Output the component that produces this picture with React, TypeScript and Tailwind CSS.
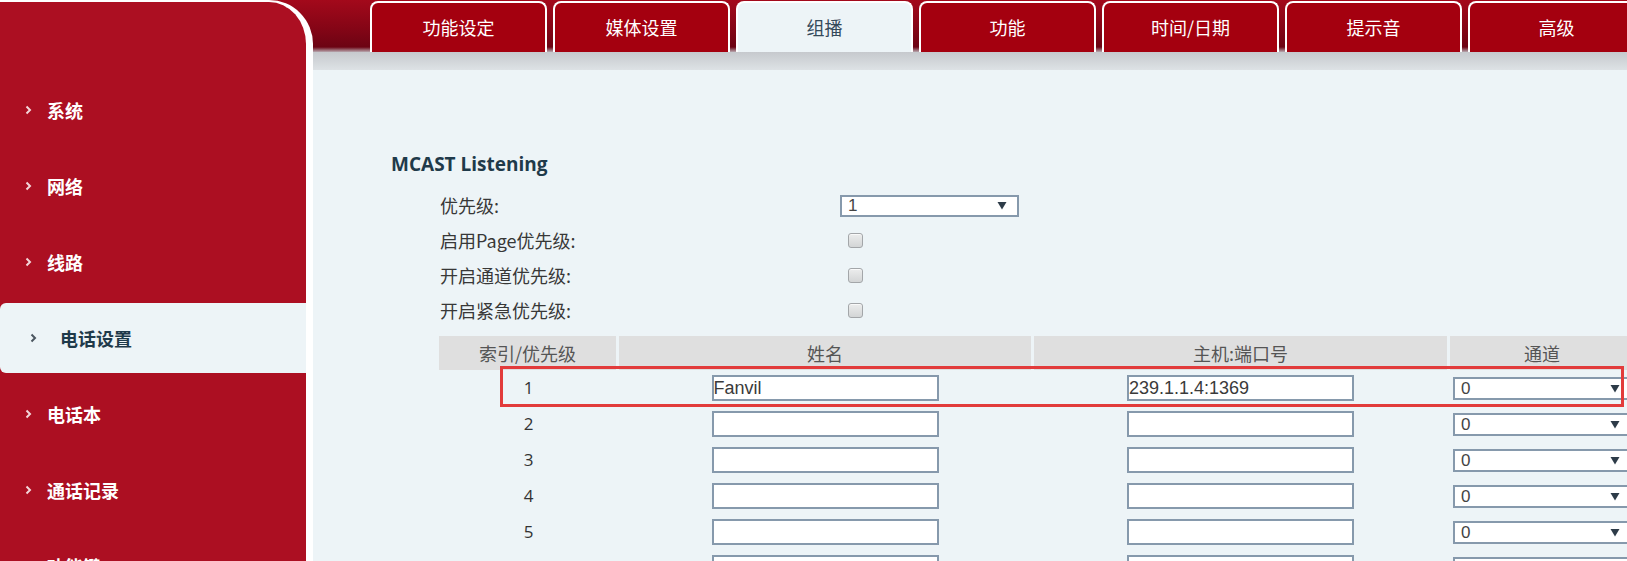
import React from 'react';

const cjk = "font-['Noto_Sans_CJK_SC','Noto_Sans',sans-serif]";

const menu = [
    { label: '系统' },
    { label: '网络' },
    { label: '线路' },
    { label: '电话设置', active: true },
    { label: '电话本' },
    { label: '通话记录' },
    { label: '功能键' }
];

const tabs = ['功能设定', '媒体设置', '组播', '功能', '时间/日期', '提示音', '高级'];

const rows = [
    { idx: 1, name: 'Fanvil', host: '239.1.1.4:1369' },
    { idx: 2, name: '', host: '' },
    { idx: 3, name: '', host: '' },
    { idx: 4, name: '', host: '' },
    { idx: 5, name: '', host: '' },
    { idx: 6, name: '', host: '' }
];

function Chevron({ dark }: { dark?: boolean }) {
    return (
        <svg width="7" height="10" viewBox="0 0 7 10" className="shrink-0">
            <path
                d="M1.5 1.5 L5 5 L1.5 8.5"
                fill="none"
                stroke={dark ? '#4b5660' : '#f3d6da'}
                strokeWidth="2"
            />
        </svg>
    );
}

function Arrow() {
    return (
        <svg width="10" height="9" viewBox="0 0 10 9" className="shrink-0">
            <path d="M0.5 1 L9.5 1 L5 8.5 Z" fill="#2d3b48" />
        </svg>
    );
}

function FakeSelect({ value, className }: { value: string; className: string }) {
    return (
        <div
            className={`flex shrink-0 items-center justify-between border-2 border-[#8699ac] bg-white pl-[6px] pr-[10px] font-['Liberation_Sans',Arial,sans-serif] text-[17px] leading-none text-[#444] ${className}`}
        >
            <span>{value}</span>
            <Arrow />
        </div>
    );
}

function Checkbox() {
    return (
        <div className="h-[15px] w-[15px] rounded-[3px] border border-[#a3a6a9] bg-[linear-gradient(180deg,#eceded,#d3d5d6)] shadow-[inset_0_1px_0_rgba(255,255,255,0.7)]" />
    );
}

function TextBox({ value }: { value: string }) {
    return (
        <div className="flex h-[26px] w-[227px] items-center border-2 border-[#8699ac] bg-white font-['Liberation_Sans',Arial,sans-serif] text-[18px] leading-none text-[#3a3a3a]">
            {value}
        </div>
    );
}

export default function App() {
    return (
        <div
            className={`relative flex h-[561px] w-full overflow-hidden bg-[linear-gradient(180deg,#a3091b_0px,#850516_28px,#6c0313_47px,#c7cacf_53px,#dce1e4_68px,#edf4f7_70px)] ${cjk}`}
        >
            {/* sidebar */}
            <aside className="h-full w-[313px] shrink-0 rounded-tr-[44px] border-t-2 border-r-[7px] border-white bg-[#ac0f22] pt-[70px]">
                {menu.map((m) =>
                    m.active ? (
                        <div key={m.label} className="flex h-[76px] items-center">
                            <div className="flex h-[70px] w-full items-center rounded-l-[6px] bg-[#edf4f7] pl-[30px]">
                                <Chevron dark />
                                <span className="ml-[23px] text-[18px] font-bold text-[#1f3a4a]">{m.label}</span>
                            </div>
                        </div>
                    ) : (
                        <div key={m.label} className="flex h-[76px] items-center pl-[25px]">
                            <Chevron />
                            <span className="ml-[15px] text-[18px] font-bold text-white">{m.label}</span>
                        </div>
                    )
                )}
            </aside>

            {/* main */}
            <main className="flex min-w-0 flex-1 flex-col overflow-hidden">
                <nav className="flex h-[52px] shrink-0 items-end gap-[6px] pl-[57px]">
                    {tabs.map((t) => (
                        <div
                            key={t}
                            className={`flex h-[51px] w-[177px] shrink-0 items-center justify-center rounded-t-[8px] border-2 border-b-0 border-white pb-[1px] text-[18px] ${
                                t === '组播' ? 'bg-[#edf4f7] text-[#34495a]' : 'bg-[#a4000f] text-white'
                            }`}
                        >
                            {t}
                        </div>
                    ))}
                </nav>
                <div className="h-[18px] shrink-0 bg-[linear-gradient(180deg,#c6c9cd,#dde2e5)]" />

                <section className="flex-1 bg-[#edf4f7] pl-[78px] pt-[80px]">
                    <h2 className="h-[28px] font-['Open_Sans',sans-serif] text-[19px] leading-[28px] font-bold text-[#1f3a4a]">
                        MCAST Listening
                    </h2>

                    <div className="mt-[10px] ml-[49px] text-[18px] text-[#383838]">
                        <div className="flex h-[35px] items-center">
                            <span className="w-[400px] shrink-0">优先级:</span>
                            <FakeSelect value="1" className="h-[22px] w-[179px]" />
                        </div>
                        {['启用Page优先级:', '开启通道优先级:', '开启紧急优先级:'].map((l) => (
                            <div key={l} className="flex h-[35px] items-center">
                                <span className="w-[408px] shrink-0">{l}</span>
                                <Checkbox />
                            </div>
                        ))}
                    </div>

                    <div className="mt-[8px] ml-[48px] w-max">
                        <div className="flex h-[34px] gap-[3px] text-[18px] text-[#555]">
                            <div className="flex w-[177px] shrink-0 items-center justify-center bg-[#dfdfdf]">索引/优先级</div>
                            <div className="flex w-[412px] shrink-0 items-center justify-center bg-[#dfdfdf]">姓名</div>
                            <div className="flex w-[413px] shrink-0 items-center justify-center bg-[#dfdfdf]">主机:端口号</div>
                            <div className="flex w-[184px] shrink-0 items-center justify-center bg-[#dfdfdf]">通道</div>
                        </div>
                        {rows.map((r) => (
                            <div key={r.idx} className="flex h-[36px] items-center gap-[3px]">
                                <div className="w-[177px] shrink-0 pl-[2px] text-center font-['Open_Sans',sans-serif] text-[17px] text-[#333]">
                                    {r.idx}
                                </div>
                                <div className="flex w-[412px] shrink-0 justify-center">
                                    <TextBox value={r.name} />
                                </div>
                                <div className="flex w-[413px] shrink-0 justify-center">
                                    <TextBox value={r.host} />
                                </div>
                                <div className="w-[184px] shrink-0 pl-[3px]">
                                    <FakeSelect value="0" className="h-[23px] w-[179px]" />
                                </div>
                            </div>
                        ))}
                    </div>
                </section>
            </main>

            {/* highlight box drawn over row 1 */}
            <div className="pointer-events-none absolute top-[366px] left-[500px] h-[41px] w-[1124px] border-[3px] border-[#e23b3b]" />
        </div>
    );
}
